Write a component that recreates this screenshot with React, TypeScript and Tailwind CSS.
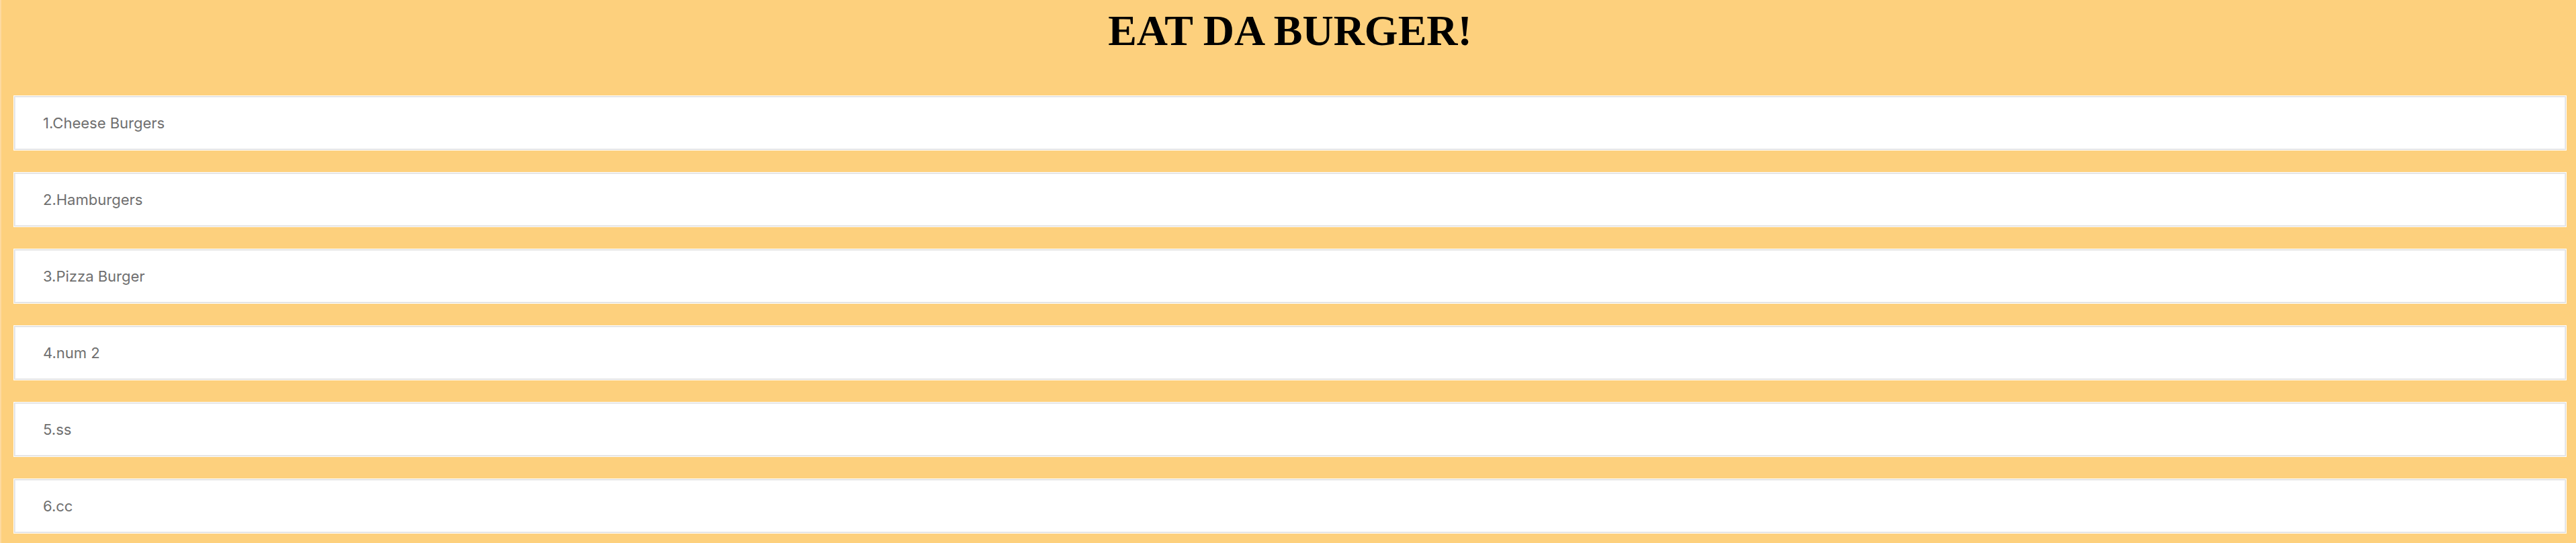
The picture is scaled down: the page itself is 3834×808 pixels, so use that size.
const burgers = [
  "Cheese Burgers",
  "Hamburgers",
  "Pizza Burger",
  "num 2",
  "ss",
  "cc",
];

function BurgerRow({ index, name }: { index: number; name: string }) {
  return (
    <li className="flex h-[82px] items-center border border-white bg-white pl-[43px] shadow-[inset_0_0_0_1px_#dedede,inset_0_0_0_2px_#ececec]">
      <span className="font-['Inter','Noto_Sans',sans-serif] text-[22px] leading-none text-[#6f6f6f]">
        {index}.{name}
      </span>
    </li>
  );
}

export default function App() {
  return (
    <div className="min-h-[808px] w-full border-l-2 border-[#fddaa0] bg-[#fdd07d] pb-[40px] pl-[18px] pr-[14px] pt-[14px]">
      <h1 className="text-center font-['Liberation_Serif','Times_New_Roman',serif] text-[64px] font-bold leading-none text-black">
        EAT DA BURGER!
      </h1>
      <ul className="mt-[64px] flex flex-col gap-[32px]">
        {burgers.map((name, i) => (
          <BurgerRow key={name} index={i + 1} name={name} />
        ))}
      </ul>
    </div>
  );
}
